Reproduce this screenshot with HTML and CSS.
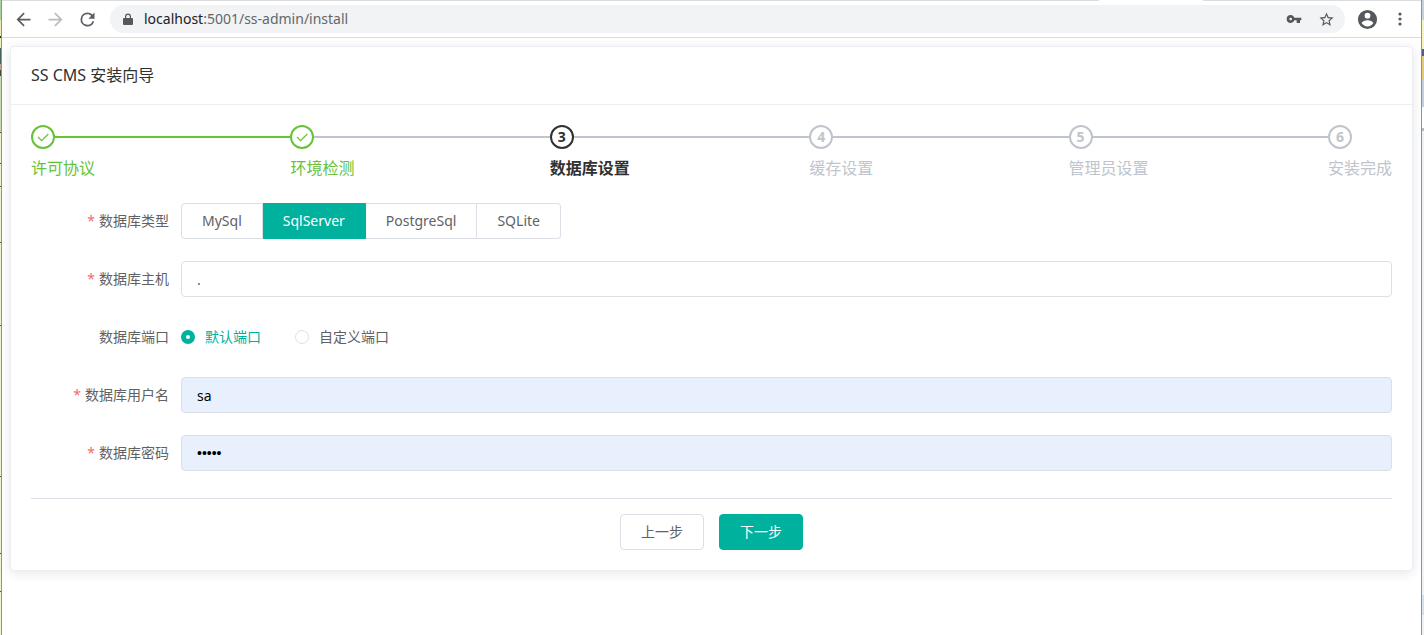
FILE: index.html
```html
<!DOCTYPE html>
<html lang="zh-CN">
<head>
<meta charset="utf-8">
<title>SS CMS 安装向导</title>
<link rel="stylesheet" href="styles.css">
</head>
<body>
<div class="desk desk-left"></div>
<div class="window">
  <div class="tab-edge"><span class="active-tab"></span></div>
  <header class="toolbar">
    <nav class="nav">
      <button class="icon-btn" type="button" aria-label="后退">
        <svg viewBox="0 0 24 24" width="21" height="21"><path d="M20 11H7.8l5.6-5.6L12 4l-8 8 8 8 1.4-1.4L7.8 13H20z" fill="#5a5e63"/></svg>
      </button>
      <button class="icon-btn" type="button" aria-label="前进">
        <svg viewBox="0 0 24 24" width="21" height="21"><path d="M4 11h12.2l-5.6-5.6L12 4l8 8-8 8-1.4-1.4 5.6-5.6H4z" fill="#babcbe"/></svg>
      </button>
      <button class="icon-btn" type="button" aria-label="刷新">
        <svg viewBox="0 0 24 24" width="21" height="21"><path d="M17.65 6.35A7.96 7.96 0 0 0 12 4a8 8 0 1 0 7.73 10h-2.08A6 6 0 1 1 12 6c1.66 0 3.14.69 4.22 1.78L13 11h7V4z" fill="#5a5e63"/></svg>
      </button>
    </nav>
    <div class="omnibox">
      <svg class="lock" viewBox="0 0 10 13" width="10" height="13"><path d="M9 5H8V3.5a3 3 0 0 0-6 0V5H1a1 1 0 0 0-1 1v5a1 1 0 0 0 1 1h8a1 1 0 0 0 1-1V6a1 1 0 0 0-1-1zM3.2 5V3.5a1.8 1.8 0 0 1 3.600 0V5z" fill="#55595e"/></svg>
      <div class="url" role="textbox" aria-label="地址" contenteditable="true" spellcheck="false"><span class="host">localhost</span>:5001/ss-admin/install</div>
      <button class="icon-btn" type="button" aria-label="密码">
        <svg viewBox="0 0 24 24" width="16" height="16"><path d="M12.65 10A6 6 0 0 0 1 12a6 6 0 0 0 11.650 2H16v4h5v-4h2v-4zM7 14a2 2 0 1 1 0-4 2 2 0 0 1 0 4z" fill="#55595e"/></svg>
      </button>
      <button class="icon-btn" type="button" aria-label="收藏">
        <svg viewBox="0 0 24 24" width="17" height="17"><path d="M22 9.240l-7.190-.62L12 2 9.190 8.630 2 9.240l5.460 4.730L5.820 21 12 17.270 18.180 21l-1.630-7.030zM12 15.400l-3.760 2.270 1-4.280-3.320-2.880 4.380-.38L12 6.100l1.710 4.040 4.380.38-3.320 2.880 1 4.280z" fill="#55595e"/></svg>
      </button>
    </div>
    <button class="icon-btn" type="button" aria-label="用户">
      <svg viewBox="0 0 24 24" width="23" height="23"><path d="M12 2a10 10 0 1 0 0 20 10 10 0 0 0 0-20zm0 3a3 3 0 1 1 0 6 3 3 0 0 1 0-6zm0 14.200a7.200 7.200 0 0 1-6-3.220c.03-1.990 4-3.080 6-3.080s5.970 1.090 6 3.080a7.200 7.200 0 0 1-6 3.220z" fill="#55595e"/></svg>
    </button>
    <button class="icon-btn menu" type="button" aria-label="菜单">
      <svg viewBox="0 0 4 14" width="4" height="14"><g fill="#55595e"><circle cx="2" cy="2" r="1.600"/><circle cx="2" cy="7" r="1.600"/><circle cx="2" cy="12" r="1.600"/></g></svg>
    </button>
  </header>

  <main class="page">
    <section class="card">
      <h1 class="card-title">SS CMS 安装向导</h1>
      <form class="card-body">
        <ol class="steps">
          <li class="step done">
            <div class="step-head"><span class="dot"><svg viewBox="0 0 14 14" width="14" height="14"><path d="M2 7l3.600 3.600L12.300 4" fill="none" stroke="currentColor" stroke-width="1.300"/></svg></span></div>
            <div class="step-name">许可协议</div>
          </li>
          <li class="step done partial">
            <div class="step-head"><span class="dot"><svg viewBox="0 0 14 14" width="14" height="14"><path d="M2 7l3.600 3.600L12.300 4" fill="none" stroke="currentColor" stroke-width="1.300"/></svg></span></div>
            <div class="step-name">环境检测</div>
          </li>
          <li class="step current">
            <div class="step-head"><span class="dot">3</span></div>
            <div class="step-name">数据库设置</div>
          </li>
          <li class="step">
            <div class="step-head"><span class="dot">4</span></div>
            <div class="step-name">缓存设置</div>
          </li>
          <li class="step">
            <div class="step-head"><span class="dot">5</span></div>
            <div class="step-name">管理员设置</div>
          </li>
          <li class="step last">
            <div class="step-head"><span class="dot">6</span></div>
            <div class="step-name">安装完成</div>
          </li>
        </ol>

        <div class="fields">
          <div class="row" role="radiogroup" aria-labelledby="type-label">
            <span class="label required" id="type-label">数据库类型</span>
            <div class="segments">
              <label class="segment"><input type="radio" name="type"><span>MySql</span></label>
              <label class="segment"><input type="radio" name="type" checked><span>SqlServer</span></label>
              <label class="segment"><input type="radio" name="type"><span>PostgreSql</span></label>
              <label class="segment"><input type="radio" name="type"><span>SQLite</span></label>
            </div>
          </div>
          <div class="row">
            <label class="label required" for="host">数据库主机</label>
            <input class="text" id="host" type="text" value=".">
          </div>
          <div class="row" role="radiogroup" aria-labelledby="port-label">
            <span class="label" id="port-label">数据库端口</span>
            <div class="options">
              <label class="option"><input type="radio" name="port" checked><span>默认端口</span></label>
              <label class="option"><input type="radio" name="port"><span>自定义端口</span></label>
            </div>
          </div>
          <div class="row">
            <label class="label required" for="user">数据库用户名</label>
            <input class="text filled" id="user" type="text" value="sa">
          </div>
          <div class="row">
            <label class="label required" for="password">数据库密码</label>
            <input class="text filled secret" id="password" type="password" value="admin">
          </div>
        </div>

        <div class="actions">
          <button class="btn" type="button">上一步</button>
          <button class="btn primary" type="button">下一步</button>
        </div>
      </form>
    </section>
  </main>
</div>
<div class="desk desk-right"></div>
</body>
</html>
```

FILE: styles.css
```css
* { box-sizing: border-box; }

body {
  margin: 0;
  min-height: 100vh;
  display: flex;
  background: #fff;
  color: #606266;
  font: 14px/20px "Noto Sans", "Noto Sans CJK SC", sans-serif;
}

button, input { font: inherit; }

/* Strips of the desktop beside the browser window */
.desk-left {
  width: 1px;
  background: linear-gradient(#a9cf9a 0 20px, #e6efb0 20px 36px, #23301a 36px 38px, #eef3b4 38px 48px, #4a6358 48px 64px, #b5a68c 64px 70px, #4a4a3c 70px 76px, #c6dcae 76px 132px, #4e5a20 132px 133px, #eef3d0 133px 163px, #4e5a20 163px 164px, #eef3d0 164px 186px, #4e5a20 186px 187px, #eef3d0 187px 242px, #4e5a20 242px 243px, #eef3d0 243px 325px, #4e5a20 325px 326px, #eef3d0 326px 476px, #4e5a20 476px 477px, #eef3d0 477px 553px, #4e5a20 553px 554px, #eef3d0 554px 591px, #4e5a20 591px 592px, #eef3d0 592px);
}
.desk-right {
  width: 2px;
  background: linear-gradient(#c5d0e0 0 20px, #f6f3b8 20px 49px, #4c5f93 49px 56px, #e6c878 56px 80px, #c3cfdc 80px 107px, #fff 107px 128px, #aebdca 128px 131px, #eff3f8 131px 595px, #d5e0e8 595px 615px, #eff3f8 615px);
}

.window {
  flex: 1;
  min-width: 0;
  border: solid #82a45c;
  border-width: 0 1px;
}

.tab-edge { height: 1px; display: flex; justify-content: flex-end; background: #dadce0; }
.active-tab { width: 104px; margin-right: 218px; background: #fff; }

.toolbar {
  height: 37px;
  display: flex;
  align-items: center;
  padding: 0 19px 0 11px;
  border-bottom: 1px solid #d9dbdd;
}
.nav { display: flex; gap: 11px; margin-right: 12px; }
.icon-btn { display: flex; padding: 0; border: 0; background: none; }
.omnibox {
  flex: 1;
  height: 28px;
  display: flex;
  align-items: center;
  gap: 16px;
  padding: 0 10px 0 13px;
  margin-right: 11px;
  border-radius: 14px;
  background: #f1f3f4;
}
.lock { margin-right: -5px; }
.url { flex: 1; font-size: 14px; color: #63676b; outline: 0; }
.host { color: #202124; }
.menu { margin-left: 19px; }

.page { padding: 8px; }
.card {
  border: 1px solid #ebeef5;
  border-radius: 4px;
  background: #fff;
  box-shadow: 0 2px 12px rgba(0, 0, 0, 0.1);
}
.card-title {
  margin: 0;
  padding: 18px 20px;
  border-bottom: 1px solid #ebeef5;
  font-size: 16px;
  line-height: 21px;
  font-weight: 400;
  color: #303133;
}
.card-body { padding: 20px; }

.steps { display: flex; margin: 0; padding: 0; list-style: none; }
.step { flex: 1; color: #c0c4cc; }
.step.last { flex: none; }
.step-head { display: flex; align-items: center; }
.step-head::after { content: ""; flex: 1; height: 2px; background: #c0c4cc; }
.step.last .step-head::after { display: none; }
.dot {
  width: 24px;
  height: 24px;
  display: flex;
  align-items: center;
  justify-content: center;
  border: 2px solid;
  border-radius: 50%;
  font-weight: 700;
}
.step-name { font-size: 16px; line-height: 38px; white-space: nowrap; }
.done { color: #67c23a; }
.done .step-head::after { background: #67c23a; }
.partial .step-head::after { background: #c0c4cc; }
.current { color: #303133; }
.current .step-name { font-weight: 700; }

.fields { display: grid; gap: 22px; padding: 16px 0 27px; }
.row { display: flex; align-items: center; min-height: 36px; }
.label { width: 150px; padding-right: 12px; text-align: right; }
.required::before { content: "*"; margin-right: 4px; color: #f56c6c; }

.text {
  flex: 1;
  min-width: 0;
  height: 36px;
  padding: 0 15px;
  border: 1px solid #dcdfe6;
  border-radius: 4px;
  background: #fff;
  color: #606266;
}
.filled { background: #e8f0fe; color: #000; }
.secret { font-family: "Liberation Sans", sans-serif; }

.segments { display: flex; }
.segment { display: flex; }
.segment input, .option input { appearance: none; margin: 0; }
.segment span {
  padding: 7px 20px;
  border: 1px solid #dcdfe6;
  border-left-width: 0;
}
.segment:first-child span { border-left-width: 1px; border-radius: 4px 0 0 4px; }
.segment:last-child span { border-radius: 0 4px 4px 0; }
.segment input:checked + span { background: #00b19d; border-color: #00b19d; color: #fff; }

.options { display: flex; gap: 34px; }
.option { display: flex; align-items: center; gap: 10px; }
.option input {
  width: 14px;
  height: 14px;
  border: 1px solid #dcdfe6;
  border-radius: 50%;
  background: #fff;
}
.option input:checked { border: 5px solid #00b19d; }
.option input:checked + span { color: #00b19d; }

.actions {
  display: flex;
  justify-content: center;
  gap: 15px;
  padding-top: 15px;
  border-top: 1px solid #dcdfe6;
}
.btn {
  height: 36px;
  padding: 0 20px;
  border: 1px solid #dcdfe6;
  border-radius: 4px;
  background: #fff;
  color: #606266;
}
.primary { border-color: #00b19d; background: #00b19d; color: #fff; }
```
